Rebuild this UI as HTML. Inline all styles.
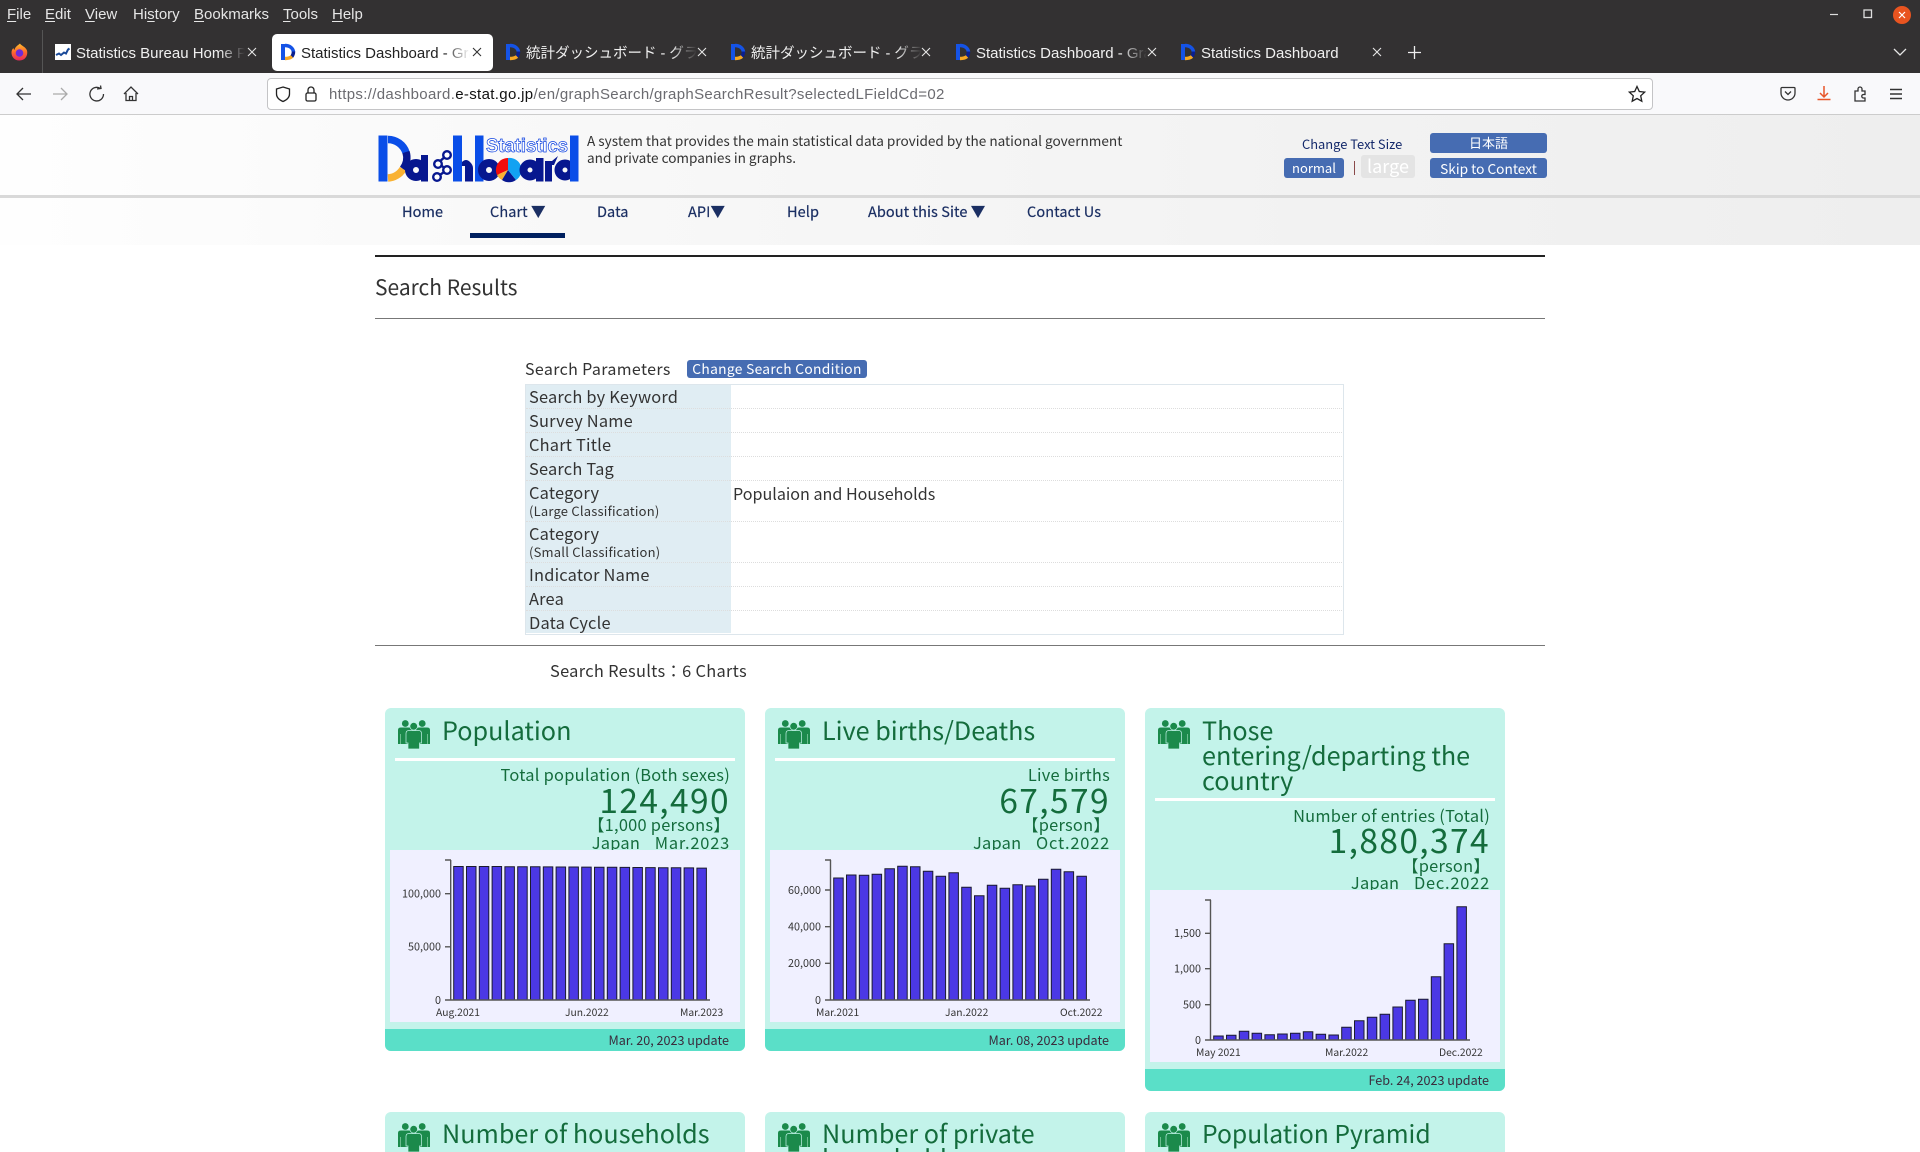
<!DOCTYPE html>
<html lang="en"><head><meta charset="utf-8"><title>Statistics Dashboard - Graph Search</title>
<style>
html,body{margin:0;padding:0;background:#fff;width:1920px;height:1152px;overflow:hidden}
#w{width:1920px;height:1152px;overflow:hidden;position:relative;font-family:"Noto Sans CJK JP","Liberation Sans",sans-serif;color:#333}
.a{position:absolute}
.t{position:absolute;white-space:nowrap;line-height:20px}
.ui{font-family:"Liberation Sans","Noto Sans CJK JP",sans-serif}
.menu{color:#e6e6e6;font-size:15px}
.menu u{text-underline-offset:2px}
.tab{color:#f0f0f0;font-size:15px;overflow:hidden;-webkit-mask-image:linear-gradient(90deg,#000 85%,transparent);mask-image:linear-gradient(90deg,#000 85%,transparent)}
.x{position:absolute;color:#e6e6e6;top:44px}
.nav{color:#1b2f63;font-size:14.5px;letter-spacing:.08px;-webkit-text-stroke:.2px #1b2f63}
.btn{position:absolute;background:#466cb2;border-radius:3px;color:#fff;text-align:center;font-size:14px}
.lab{font-size:16.4px;letter-spacing:.2px;color:#333;left:529px}
.sm{font-size:13px;letter-spacing:.2px;color:#333;left:529px}
.card{position:absolute;width:360px;background:#c3f3ea;border-radius:6px}
.bar{position:absolute;left:0;right:0;bottom:0;height:22px;background:#5adfc8;border-radius:0 0 6px 6px}
.ln{position:absolute;background:#fff;height:3px}
.ttl{font-size:25.2px;color:#146c3c;line-height:25px}
.g{color:#146c3c}
.s16{font-size:16.4px;letter-spacing:.25px}
.d{letter-spacing:.8px;margin-left:-2px}
.n{font-size:33.5px;letter-spacing:1.4px;color:#146c3c}
.upd{font-size:12.6px;color:#3a2b3c}
.panel{position:absolute;background:#f0f0ff}
svg text{font-family:"Noto Sans CJK JP","Liberation Sans",sans-serif;fill:#333;font-size:10.8px}
svg text.xl{font-size:10.3px}
</style></head><body><div id="w">

<svg width="0" height="0" style="position:absolute"><defs>
<symbol id="ppl" viewBox="0 0 32 29">
<circle cx="7.3" cy="3.5" r="3.4" fill="#1b8a4b"/><circle cx="24.2" cy="3.5" r="3.4" fill="#1b8a4b"/>
<path d="M0 10q0-2.500 3-2.500h8q3 0 3 2.500v14H0z" fill="#1b8a4b"/><path d="M18 10q0-2.500 3-2.500h8q3 0 3 2.500v14H18z" fill="#1b8a4b"/>
<path d="M2.500 14v10M29.500 14v10" stroke="#7fc9a0" stroke-width=".8"/>
<circle cx="15.700" cy="6.300" r="3.800" fill="#1b8a4b" stroke="#c3f3ea" stroke-width=".6"/>
<path d="M8 13.500q0-3 3-3h9.500q3 0 3 3v9.500h-2v6h-11.500v-6h-2z" fill="#1b8a4b" stroke="#c3f3ea" stroke-width=".7"/>
</symbol>
<symbol id="fav" viewBox="0 0 16 18">
<path d="M1 1h4v16H1z" fill="#1553e6"/><path d="M5 2.500c4.500 0 8 2.500 8.500 6.500" fill="none" stroke="#1553e6" stroke-width="3.500"/><path d="M13.500 8.500c0 2.500-.7 4-2 5.500" fill="none" stroke="#0a1f8f" stroke-width="3.500"/><path d="M12 13.500c-1.700 1.500-4 2-7 2" fill="none" stroke="#f7a823" stroke-width="3.500"/>
</symbol>
</defs></svg>

<!-- browser chrome -->
<div class="a" style="left:0;top:0;width:1920px;height:73px;background:#333132"></div>
<div class="a" style="left:0;top:73px;width:1920px;height:41px;background:#f9f9fb;border-bottom:1px solid #ccc"></div>
<span class="t ui menu" style="left:7px;top:4.500px"><u>F</u>ile</span>
<span class="t ui menu" style="left:45px;top:4.500px"><u>E</u>dit</span>
<span class="t ui menu" style="left:85px;top:4.500px"><u>V</u>iew</span>
<span class="t ui menu" style="left:133px;top:4.500px">Hi<u>s</u>tory</span>
<span class="t ui menu" style="left:194px;top:4.500px"><u>B</u>ookmarks</span>
<span class="t ui menu" style="left:283px;top:4.500px"><u>T</u>ools</span>
<span class="t ui menu" style="left:332px;top:4.500px"><u>H</u>elp</span>

<svg class="a" style="left:11px;top:43px" width="17" height="18" viewBox="0 0 17 18"><defs><linearGradient id="ff" x1="0" y1="0" x2="0" y2="1"><stop offset="0" stop-color="#ffbd2e"/><stop offset=".5" stop-color="#ff6a2b"/><stop offset="1" stop-color="#e8275c"/></linearGradient></defs><path d="M9 .5c1 2 5 3 6.800 6.500 1.500 4-.6 10.500-7.300 10.500C3 17.500.5 13.500.5 9.500.5 7.500 1.300 6 2.500 5c0 1 .5 1.500 1 2C4 4 6.500 2.500 9 .5z" fill="url(#ff)"/><circle cx="8.500" cy="10" r="3.800" fill="#6e2bd9"/></svg>
<div class="a" style="left:42px;top:30px;width:1px;height:43px;background:#555"></div>

<div class="a" style="left:55px;top:44px;width:16px;height:16px;background:#fff"></div>
<svg class="a" style="left:55px;top:44px" width="16" height="16"><path d="M1 11l3-1.500 2 1.500 3-2.500 2 1 2-4 1.500-1" fill="none" stroke="#1a4a99" stroke-width="2"/></svg>
<div class="t ui tab" style="left:76px;top:43.500px;width:169px">Statistics Bureau Home Page</div>
<svg class="x" style="left:247px" width="10" height="16"><path d="M1 4l8 8M9 4l-8 8" stroke="#e6e6e6" stroke-width="1.100"/></svg>

<div class="a" style="left:272px;top:34px;width:221px;height:37px;background:#fff;border-radius:5px"></div>
<svg class="a" style="left:280px;top:43px" width="16" height="18"><use href="#fav"/></svg>
<div class="t ui tab" style="left:301px;top:43.500px;width:169px;color:#222">Statistics Dashboard - Graph Search</div>
<svg class="x" style="left:472px" width="10" height="16"><path d="M1 4l8 8M9 4l-8 8" stroke="#333" stroke-width="1.100"/></svg>

<svg class="a" style="left:505px;top:43px" width="16" height="18"><use href="#fav"/></svg>
<div class="t ui tab" style="left:526px;top:43.500px;width:171px;font-size:14.500px">統計ダッシュボード - グラフ検索</div>
<svg class="x" style="left:697px" width="10" height="16"><path d="M1 4l8 8M9 4l-8 8" stroke="#e6e6e6" stroke-width="1.100"/></svg>

<svg class="a" style="left:730px;top:43px" width="16" height="18"><use href="#fav"/></svg>
<div class="t ui tab" style="left:751px;top:43.500px;width:171px;font-size:14.500px">統計ダッシュボード - グラフ検索</div>
<svg class="x" style="left:921px" width="10" height="16"><path d="M1 4l8 8M9 4l-8 8" stroke="#e6e6e6" stroke-width="1.100"/></svg>

<svg class="a" style="left:955px;top:43px" width="16" height="18"><use href="#fav"/></svg>
<div class="t ui tab" style="left:976px;top:43.500px;width:171px">Statistics Dashboard - Graph Search</div>
<svg class="x" style="left:1147px" width="10" height="16"><path d="M1 4l8 8M9 4l-8 8" stroke="#e6e6e6" stroke-width="1.100"/></svg>

<svg class="a" style="left:1180px;top:43px" width="16" height="18"><use href="#fav"/></svg>
<span class="t ui" style="left:1201px;top:43.500px;color:#f0f0f0;font-size:15px">Statistics Dashboard</span>
<svg class="x" style="left:1372px" width="10" height="16"><path d="M1 4l8 8M9 4l-8 8" stroke="#e6e6e6" stroke-width="1.100"/></svg>
<svg class="a" style="left:1408px;top:46px" width="13" height="13"><path d="M6.500 0v13M0 6.500h13" stroke="#eee" stroke-width="1.300"/></svg>
<svg class="a" style="left:1893px;top:47px" width="14" height="10"><path d="M1 2l6 6 6-6" fill="none" stroke="#e6e6e6" stroke-width="1.300"/></svg>

<svg class="a" style="left:1830px;top:8px" width="84" height="14"><path d="M0 6.500h8" stroke="#ddd" stroke-width="1.200"/></svg>
<svg class="a" style="left:1863px;top:9px" width="10" height="10"><rect x="1" y="1" width="7.500" height="7.500" fill="none" stroke="#ddd" stroke-width="1.300"/></svg>
<div class="a" style="left:1893px;top:6px;width:18px;height:18px;border-radius:50%;background:#e95420"></div>
<svg class="a" style="left:1898px;top:11px" width="8" height="8"><path d="M1 1l6 6M7 1l-6 6" stroke="#fff" stroke-width="1.200"/></svg>

<svg class="a" style="left:16px;top:85px" width="135" height="18" fill="none" stroke="#333" stroke-width="1.300">
<path d="M1 9h14M7 3L1 9l6 6"/>
<path d="M37 9h14M45 3l6 6-6 6" stroke="#aaa"/>
<path d="M84.500 3.500a6.800 6.800 0 1 0 3 5.500M81 4l4-.5-.5-3"/>
<path d="M108 9l7-7 7 7M110 8v7.500h10V8M113.500 15.500v-4h3v4"/>
</svg>
<div class="a" style="left:267px;top:78px;width:1384px;height:30px;background:#fff;border:1px solid #c4c4c6;border-radius:4px"></div>
<svg class="a" style="left:275px;top:85px" width="46" height="18" fill="none" stroke="#222" stroke-width="1.300">
<path d="M8 2l6.500 2v5c0 3.500-3 6-6.500 7.500C4.500 15 1.500 12.500 1.500 9V4z"/>
<rect x="31" y="8" width="10" height="8" rx="1.500"/><path d="M33 8V5a3 3 0 0 1 6 0v3"/>
</svg>
<span class="t ui" style="left:329px;top:85px;font-size:15px;color:#6b6b70;letter-spacing:.34px">https://dashboard.<span style="color:#111">e-stat.go.jp</span>/en/graphSearch/graphSearchResult?selectedLFieldCd=02</span>
<svg class="a" style="left:1628px;top:85px" width="18" height="18"><path d="M9 1.500l2.300 5 5.400.6-4 3.700 1.100 5.400L9 13.500l-4.800 2.700 1.100-5.400-4-3.700 5.400-.6z" fill="none" stroke="#222" stroke-width="1.300"/></svg>
<svg class="a" style="left:1780px;top:85px" width="126" height="18" fill="none" stroke="#333" stroke-width="1.300">
<path d="M2 2.500h12a1 1 0 0 1 1 1V8a7 7 0 0 1-14 0V3.500a1 1 0 0 1 1-1zM5 6.500l3 3 3-3"/>
<path d="M44 1v11M40 8l4 4 4-4M37.500 14.500h13" stroke="#e8562a" stroke-width="1.500"/>
<path d="M75 16V6h3V4a2 2 0 0 1 4 0v2h3v3.500h-1.500a1.700 1.700 0 0 0 0 3.500H85v3z"/>
<path d="M110 4.500h12M110 9h12M110 13.500h12" stroke-width="1.500"/>
</svg>

<!-- site header -->
<div class="a" style="left:0;top:115px;width:1920px;height:130px;background:linear-gradient(90deg,#fefefe 0%,#f9f9f9 25%,#f2f2f2 70%,#eee 100%)"></div>
<div class="a" style="left:0;top:195px;width:1920px;height:3px;background:#d9d9d9"></div>

<svg class="a" style="left:370px;top:128px" width="220" height="64" viewBox="0 0 220 64">
<rect x="8.500" y="7.500" width="9" height="46" fill="#0a4ee8"/>
<path d="M18 11.500a19 19 0 0 1 18 13" fill="none" stroke="#0a4ee8" stroke-width="7.500"/>
<path d="M36 24a19 19 0 0 1-3 17" fill="none" stroke="#07178f" stroke-width="7.500"/>
<path d="M33 41a19 19 0 0 1-15 9" fill="none" stroke="#f9b233" stroke-width="7.500"/>
<circle cx="46" cy="42" r="7" fill="none" stroke="#07178f" stroke-width="8"/><rect x="51" y="27" width="7" height="26.500" fill="#07178f"/>
<g fill="#fff" stroke="#07178f" stroke-width="2.400"><path d="M77 27l-9 8 9 7-10 7" fill="none"/><circle cx="77" cy="27" r="3.800"/><circle cx="68" cy="36" r="3.800"/><circle cx="77" cy="42" r="3.800"/><circle cx="67" cy="49" r="3.800"/></g>
<rect x="83" y="7.500" width="9" height="46" fill="#0a4ee8"/><path d="M92 34q4-4 8 0 3 3 3 6v13.500h-8V38h-3z" fill="#07178f"/>
<rect x="105" y="7.500" width="8.500" height="46" fill="#0a4ee8"/>
<circle cx="119" cy="42" r="7" fill="none" stroke="#07178f" stroke-width="8"/>
<path d="M138 42V30a12 12 0 0 0-11 17z" fill="#f00c0c"/><path d="M138 42l-11 5a12 12 0 0 0 5 5z" fill="#f9b233"/><path d="M138 42l-6 10a12 12 0 0 0 14 0z" fill="#07178f"/><path d="M138 42V30a12 12 0 0 1 8 22z" fill="#12a2f2"/>
<circle cx="160" cy="42" r="6.500" fill="none" stroke="#07178f" stroke-width="8"/><rect x="166" y="30" width="7.500" height="23.500" fill="#07178f"/>
<path d="M175 53.500V33h7l6-5-4 9h-2v16.500z" fill="#07178f"/>
<circle cx="195" cy="42" r="6.500" fill="none" stroke="#07178f" stroke-width="8"/><rect x="200" y="7.500" width="8.500" height="46" fill="#0a4ee8"/>
<text x="116" y="24" textLength="82" lengthAdjust="spacingAndGlyphs" style="font-family:'Liberation Sans',sans-serif;font-size:19px;font-weight:bold;fill:#fff;stroke:#0a3fe0;stroke-width:.7px">Statistics</text>
</svg>

<span class="t" style="left:587px;top:130px;font-size:13.600px;color:#333">A system that provides the main statistical data provided by the national government</span>
<span class="t" style="left:587px;top:147px;font-size:13.600px;color:#333">and private companies in graphs.</span>

<span class="t" style="left:1302px;top:134px;font-size:12.900px;color:#14296b">Change Text Size</span>
<div class="btn" style="left:1284px;top:158px;width:60px;height:20px;line-height:20px;font-size:13px">normal</div>
<div class="a" style="left:1354px;top:161px;width:1px;height:14px;background:#8a4a4a"></div>
<div class="a" style="left:1361px;top:155px;width:54px;height:23px;line-height:23px;background:#e4e4e4;border-radius:3px;color:#fff;text-align:center;font-size:18px">large</div>
<div class="btn" style="left:1430px;top:133px;width:117px;height:20px;line-height:20px;font-size:13px">日本語</div>
<div class="btn" style="left:1430px;top:158px;width:117px;height:20px;line-height:20px;font-size:13.700px">Skip to Context</div>

<span class="t nav" style="left:402px;top:202px">Home</span>
<span class="t nav" style="left:490px;top:202px">Chart ▼</span>
<span class="t nav" style="left:597px;top:202px">Data</span>
<span class="t nav" style="left:688px;top:202px">API▼</span>
<span class="t nav" style="left:787px;top:202px">Help</span>
<span class="t nav" style="left:868px;top:202px">About this Site ▼</span>
<span class="t nav" style="left:1027px;top:202px">Contact Us</span>
<div class="a" style="left:470px;top:233px;width:95px;height:5px;background:#00205f"></div>

<!-- content -->
<div class="a" style="left:375px;top:255px;width:1170px;height:2px;background:#222"></div>
<span class="t" style="left:375px;top:277px;font-size:21px;color:#333">Search Results</span>
<div class="a" style="left:375px;top:318px;width:1170px;height:1px;background:#777"></div>
<span class="t" style="left:525px;top:358px;font-size:16px;letter-spacing:.36px;color:#333">Search Parameters</span>
<div class="btn" style="left:687px;top:360px;width:180px;height:18px;line-height:17px;font-size:13.800px;letter-spacing:.3px;color:#fff">Change Search Condition</div>

<div class="a" style="left:525px;top:384px;width:817px;height:249px;border:1px solid #dde6ec"></div>
<div class="a" style="left:526px;top:385px;width:205px;height:248px;background:#e0edf3"></div>
<div class="a" style="left:526px;top:408px;width:816px;border-top:1px dotted #ddd"></div>
<div class="a" style="left:526px;top:432px;width:816px;border-top:1px dotted #ddd"></div>
<div class="a" style="left:526px;top:456px;width:816px;border-top:1px dotted #ddd"></div>
<div class="a" style="left:526px;top:480px;width:816px;border-top:1px dotted #ddd"></div>
<div class="a" style="left:526px;top:521px;width:816px;border-top:1px dotted #ddd"></div>
<div class="a" style="left:526px;top:562px;width:816px;border-top:1px dotted #ddd"></div>
<div class="a" style="left:526px;top:586px;width:816px;border-top:1px dotted #ddd"></div>
<div class="a" style="left:526px;top:610px;width:816px;border-top:1px dotted #ddd"></div>
<span class="t lab" style="top:386px">Search by Keyword</span>
<span class="t lab" style="top:410px">Survey Name</span>
<span class="t lab" style="top:434px">Chart Title</span>
<span class="t lab" style="top:458px">Search Tag</span>
<span class="t lab" style="top:482px">Category</span>
<span class="t sm" style="top:501px">(Large Classification)</span>
<span class="t lab" style="top:523px">Category</span>
<span class="t sm" style="top:542px">(Small Classification)</span>
<span class="t lab" style="top:564px">Indicator Name</span>
<span class="t lab" style="top:588px">Area</span>
<span class="t lab" style="top:612px">Data Cycle</span>
<span class="t" style="left:733px;top:483px;font-size:16.100px;color:#333">Populaion and Households</span>

<div class="a" style="left:375px;top:645px;width:1170px;height:1px;background:#777"></div>
<span class="t" style="left:550px;top:660px;font-size:16.400px;letter-spacing:.3px;color:#333">Search Results：6 Charts</span>

<!-- card 1 -->
<div class="card" style="left:385px;top:708px;height:343px"><div class="bar"></div></div>
<svg class="a" style="left:398px;top:720px" width="32" height="29"><use href="#ppl"/></svg>
<span class="t ttl" style="left:442px;top:718px">Population</span>
<div class="ln" style="left:395px;top:758px;width:340px"></div>
<span class="t g s16" style="right:1190px;top:764px">Total population (Both sexes)</span>
<span class="t n" style="right:1190px;top:788.500px">124,490</span>
<span class="t g s16" style="right:1190px;top:814px">【1,000 persons】</span>
<span class="t g s16" style="right:1190px;top:831.500px">Japan　<span class="d">Mar.2023</span></span>
<div class="panel" style="left:390px;top:850px;width:350px;height:172px"></div>
<svg class="a" style="left:390px;top:850px" width="350" height="172" viewBox="390 850 350 172">
<path d="M453.700 1000V866.500h9.500V1000zM466.500 1000V866.500h9.500V1000zM479.300 1000V866.500h9.500V1000zM492.100 1000V866.500h9.500V1000zM504.900 1000V866.700h9.500V1000zM517.700 1000V866.700h9.500V1000zM530.500 1000V866.800h9.500V1000zM543.300 1000V866.900h9.500V1000zM556.100 1000V867h9.500V1000zM568.900 1000V867h9.500V1000zM581.700 1000V867.100h9.500V1000zM594.500 1000V867.200h9.500V1000zM607.300 1000V867.300h9.500V1000zM620.100 1000V867.400h9.500V1000zM632.900 1000V867.500h9.500V1000zM645.700 1000V867.600h9.500V1000zM658.500 1000V867.700h9.500V1000zM671.300 1000V867.800h9.500V1000zM684.100 1000V867.900h9.500V1000zM696.900 1000V868.100h9.500V1000z" fill="#4b38e5" stroke="#1b1b2e" stroke-width="1"/>
<path d="M450.700 860V1000M445 860h6M445 893.700h6M445 946.800h6M445 1000H710" fill="none" stroke="#555" stroke-width="1.400"/>
<text x="441" y="897.500" text-anchor="end">100,000</text><text x="441" y="950.500" text-anchor="end">50,000</text><text x="441" y="1004" text-anchor="end">0</text>
<text class="xl" x="436" y="1016">Aug.2021</text><text class="xl" x="565" y="1016">Jun.2022</text><text class="xl" x="680" y="1016">Mar.2023</text>
</svg>
<span class="t upd" style="right:1191px;top:1030px">Mar. 20, 2023 update</span>

<!-- card 2 -->
<div class="card" style="left:765px;top:708px;height:343px"><div class="bar"></div></div>
<svg class="a" style="left:778px;top:720px" width="32" height="29"><use href="#ppl"/></svg>
<span class="t ttl" style="left:822px;top:718px">Live births/Deaths</span>
<div class="ln" style="left:775px;top:758px;width:340px"></div>
<span class="t g s16" style="right:810px;top:764px">Live births</span>
<span class="t n" style="right:810px;top:788.500px">67,579</span>
<span class="t g s16" style="right:810px;top:814px">【person】</span>
<span class="t g s16" style="right:810px;top:831.500px">Japan　<span class="d">Oct.2022</span></span>
<div class="panel" style="left:770px;top:850px;width:350px;height:172px"></div>
<svg class="a" style="left:770px;top:850px" width="350" height="172" viewBox="770 850 350 172">
<path d="M833.700 1000V878h9.500V1000zM846.500 1000V875h9.500V1000zM859.300 1000V875.300h9.500V1000zM872.100 1000V874.300h9.500V1000zM884.900 1000V868.700h9.500V1000zM897.700 1000V866.300h9.500V1000zM910.500 1000V866.700h9.500V1000zM923.300 1000V871.300h9.500V1000zM936.100 1000V876.300h9.500V1000zM948.900 1000V872.700h9.500V1000zM961.700 1000V887.300h9.500V1000zM974.500 1000V895.700h9.500V1000zM987.300 1000V885.300h9.500V1000zM1000.100 1000V888.300h9.500V1000zM1012.900 1000V884.700h9.500V1000zM1025.700 1000V886h9.500V1000zM1038.500 1000V879.300h9.500V1000zM1051.300 1000V869.300h9.500V1000zM1064.100 1000V871.700h9.500V1000zM1076.900 1000V876.300h9.500V1000z" fill="#4b38e5" stroke="#1b1b2e" stroke-width="1"/>
<path d="M830.500 860V1000M825 860h6M825 890h6M825 926.700h6M825 963.300h6M825 1000H1090" fill="none" stroke="#555" stroke-width="1.400"/>
<text x="821" y="894" text-anchor="end">60,000</text><text x="821" y="930.500" text-anchor="end">40,000</text><text x="821" y="967" text-anchor="end">20,000</text><text x="821" y="1004" text-anchor="end">0</text>
<text class="xl" x="816" y="1016">Mar.2021</text><text class="xl" x="945" y="1016">Jan.2022</text><text class="xl" x="1060" y="1016">Oct.2022</text>
</svg>
<span class="t upd" style="right:811px;top:1030px">Mar. 08, 2023 update</span>

<!-- card 3 -->
<div class="card" style="left:1145px;top:708px;height:383px"><div class="bar"></div></div>
<svg class="a" style="left:1158px;top:720px" width="32" height="29"><use href="#ppl"/></svg>
<span class="t ttl" style="left:1202px;top:718px">Those</span>
<span class="t ttl" style="left:1202px;top:743px">entering/departing the</span>
<span class="t ttl" style="left:1202px;top:768px">country</span>
<div class="ln" style="left:1155px;top:798px;width:340px"></div>
<span class="t g s16" style="right:430px;top:804.500px">Number of entries (Total)</span>
<span class="t n" style="right:430px;top:828.500px">1,880,374</span>
<span class="t g s16" style="right:430px;top:855px">【person】</span>
<span class="t g s16" style="right:430px;top:871.500px">Japan　<span class="d">Dec.2022</span></span>
<div class="panel" style="left:1150px;top:890px;width:350px;height:172px"></div>
<svg class="a" style="left:1150px;top:890px" width="350" height="172" viewBox="1150 890 350 172">
<path d="M1213.700 1040V1036h9.500V1040zM1226.500 1040V1035.300h9.500V1040zM1239.300 1040V1031.300h9.500V1040zM1252.100 1040V1033.300h9.500V1040zM1264.900 1040V1034.700h9.500V1040zM1277.700 1040V1034h9.500V1040zM1290.500 1040V1033.300h9.500V1040zM1303.300 1040V1031.700h9.500V1040zM1316.100 1040V1034.300h9.500V1040zM1328.900 1040V1035h9.500V1040zM1341.700 1040V1027.300h9.500V1040zM1354.500 1040V1020.700h9.500V1040zM1367.300 1040V1017.300h9.500V1040zM1380.100 1040V1014.300h9.500V1040zM1392.900 1040V1007h9.500V1040zM1405.700 1040V1000.300h9.500V1040zM1418.500 1040V999.300h9.500V1040zM1431.300 1040V976.700h9.500V1040zM1444.100 1040V943.700h9.500V1040zM1456.900 1040V906.700h9.500V1040z" fill="#4b38e5" stroke="#1b1b2e" stroke-width="1"/>
<path d="M1210.500 900V1040M1205 900h6M1205 933.300h6M1205 968.700h6M1205 1004.700h6M1205 1040H1470" fill="none" stroke="#555" stroke-width="1.400"/>
<text x="1201" y="937" text-anchor="end">1,500</text><text x="1201" y="972.500" text-anchor="end">1,000</text><text x="1201" y="1008.500" text-anchor="end">500</text><text x="1201" y="1044" text-anchor="end">0</text>
<text class="xl" x="1196" y="1056">May 2021</text><text class="xl" x="1325" y="1056">Mar.2022</text><text class="xl" x="1439" y="1056">Dec.2022</text>
</svg>
<span class="t upd" style="right:431px;top:1070px">Feb. 24, 2023 update</span>

<!-- row 2 -->
<div class="card" style="left:385px;top:1112px;height:60px"></div>
<svg class="a" style="left:398px;top:1123px" width="32" height="29"><use href="#ppl"/></svg>
<span class="t ttl" style="left:442px;top:1121px">Number of households</span>
<div class="card" style="left:765px;top:1112px;height:60px"></div>
<svg class="a" style="left:778px;top:1123px" width="32" height="29"><use href="#ppl"/></svg>
<span class="t ttl" style="left:822px;top:1121px">Number of private</span>
<span class="t ttl" style="left:822px;top:1146px">households</span>
<div class="card" style="left:1145px;top:1112px;height:60px"></div>
<svg class="a" style="left:1158px;top:1123px" width="32" height="29"><use href="#ppl"/></svg>
<span class="t ttl" style="left:1202px;top:1121px;font-size:24.700px">Population Pyramid</span>

</div></body></html>
